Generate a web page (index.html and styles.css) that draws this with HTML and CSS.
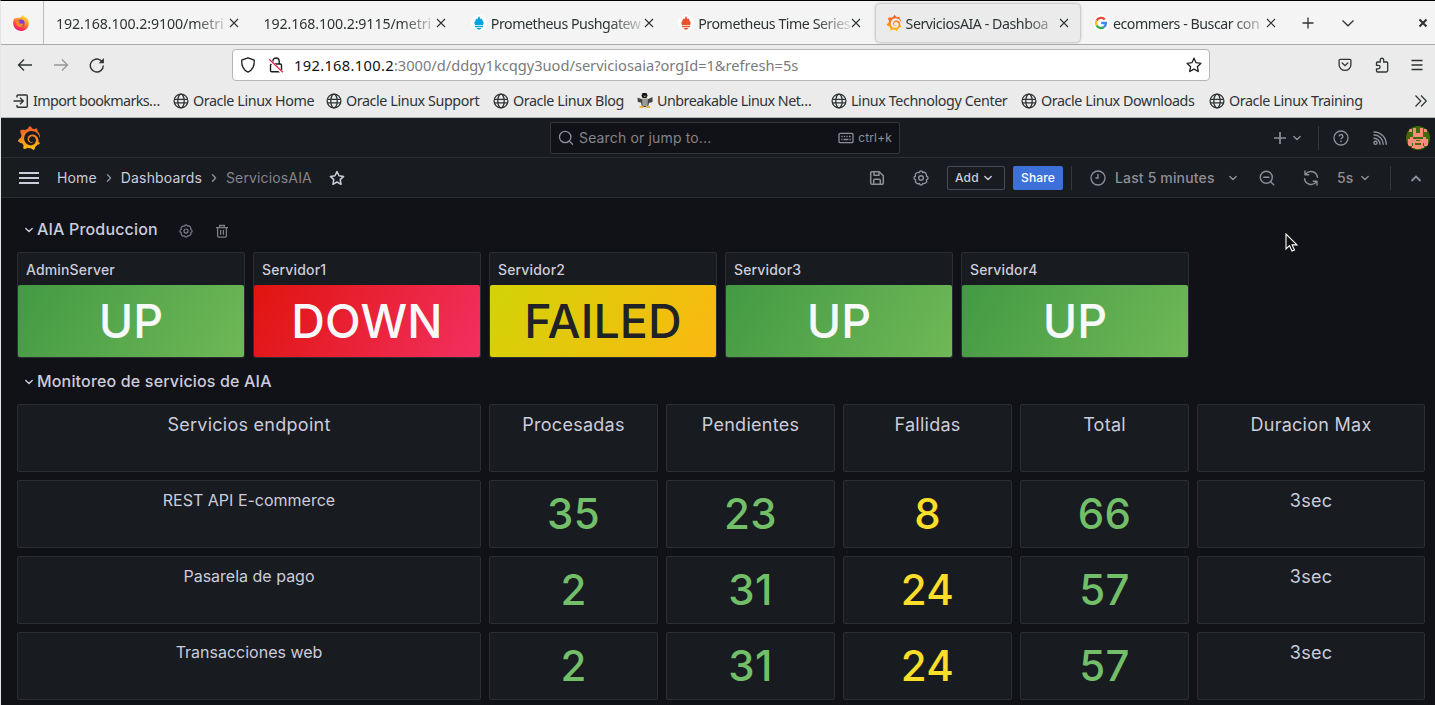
FILE: index.html
```html
<!DOCTYPE html>
<html lang="es">
<head>
<meta charset="utf-8">
<title>ServiciosAIA - Dashboards</title>
<link rel="stylesheet" href="styles.css">
</head>
<body>
<svg class="defs" width="0" height="0">
  <defs>
    <linearGradient id="g-graf" x1="0" y1="1" x2="0" y2="0"><stop offset="0" stop-color="#fcc60e"/><stop offset=".45" stop-color="#f78a1e"/><stop offset="1" stop-color="#f05a28"/></linearGradient>
    <linearGradient id="g-fox" x1=".8" y1="0" x2=".3" y2="1"><stop offset="0" stop-color="#fff14a"/><stop offset=".4" stop-color="#ff9a1f"/><stop offset=".75" stop-color="#ff3b4d"/><stop offset="1" stop-color="#e31587"/></linearGradient>
    <symbol id="grafana" viewBox="0 0 24 24"><path fill="url(#g-graf)" d="M23.02 10.59a8.578 8.578 0 0 0-.862-3.034 8.911 8.911 0 0 0-1.789-2.445c.337-1.342-.413-2.505-.413-2.505-1.292-.08-2.113.4-2.416.62-.052-.02-.102-.044-.154-.064-.22-.089-.446-.172-.677-.247-.231-.073-.47-.14-.711-.197a9.867 9.867 0 0 0-.875-.161C14.557.753 12.94 0 12.94 0c-1.804 1.145-2.147 2.744-2.147 2.744l-.018.093c-.098.029-.2.057-.298.088-.138.042-.275.094-.413.143-.138.055-.275.107-.41.166a8.869 8.869 0 0 0-1.557.87l-.063-.029c-2.497-.955-4.716.195-4.716.195-.203 2.658.996 4.33 1.235 4.636a11.608 11.608 0 0 0-.607 2.635C1.636 12.677.953 15.014.953 15.014c1.926 2.214 4.171 2.351 4.171 2.351.003-.002.006-.002.006-.005.285.509.615.994.986 1.446.156.19.32.371.488.548-.704 2.009.099 3.68.099 3.68 2.144.08 3.553-.937 3.849-1.173a9.784 9.784 0 0 0 3.164.501h.08l.055-.003.107-.002.103-.005.003.002c1.01 1.44 2.788 1.646 2.788 1.646 1.264-1.332 1.337-2.653 1.337-2.94v-.058c0-.02-.003-.039-.003-.06.265-.187.52-.387.758-.6a7.875 7.875 0 0 0 1.415-1.7c1.43.083 2.437-.885 2.437-.885-.236-1.49-1.085-2.216-1.264-2.354l-.018-.013-.016-.013a.217.217 0 0 1-.031-.02c.008-.092.016-.18.02-.27.011-.162.016-.323.016-.48v-.253l-.005-.098-.008-.135a1.891 1.891 0 0 0-.01-.13c-.003-.042-.008-.083-.013-.125l-.016-.124-.018-.122a6.215 6.215 0 0 0-2.032-3.73 6.015 6.015 0 0 0-3.222-1.46 6.292 6.292 0 0 0-.85-.048l-.107.002h-.063l-.044.003-.104.008a4.777 4.777 0 0 0-3.335 1.695c-.332.4-.592.84-.768 1.297a4.594 4.594 0 0 0-.312 1.817l.003.091c.005.055.007.11.013.164a3.615 3.615 0 0 0 .698 1.82 3.53 3.53 0 0 0 1.827 1.282c.33.098.66.14.971.137.039 0 .078 0 .114-.002l.063-.003c.02 0 .041-.003.062-.003.034-.002.065-.007.099-.01.007 0 .018-.003.028-.003l.031-.005.06-.008a1.18 1.18 0 0 0 .112-.02c.036-.008.072-.013.109-.024a2.634 2.634 0 0 0 .914-.415c.028-.02.056-.041.085-.065a.248.248 0 0 0 .039-.35.244.244 0 0 0-.309-.06l-.078.042c-.09.044-.184.083-.283.116a2.476 2.476 0 0 1-.475.096c-.028.003-.054.006-.083.006l-.083.002c-.026 0-.054 0-.08-.002l-.102-.006h-.012l-.024.006c-.016-.003-.031-.003-.044-.006-.031-.002-.06-.007-.091-.01a2.59 2.59 0 0 1-.724-.213 2.557 2.557 0 0 1-.667-.438 2.52 2.52 0 0 1-.805-1.475 2.306 2.306 0 0 1-.029-.444l.006-.122v-.023l.002-.031c.003-.021.003-.04.005-.06a3.163 3.163 0 0 1 1.352-2.29 3.12 3.12 0 0 1 .937-.43 2.946 2.946 0 0 1 .776-.101h.06l.07.002.045.003h.026l.07.005a4.041 4.041 0 0 1 1.635.49 3.94 3.94 0 0 1 1.602 1.662 3.77 3.77 0 0 1 .397 1.414l.005.076.003.075c.002.026.002.05.002.075 0 .024.003.052 0 .07v.065l-.002.073-.008.174a6.195 6.195 0 0 1-.08.639 5.1 5.1 0 0 1-.267.927 5.31 5.31 0 0 1-.624 1.13 5.052 5.052 0 0 1-3.237 2.014 4.82 4.82 0 0 1-.649.066l-.039.003h-.287a6.607 6.607 0 0 1-1.716-.265 6.776 6.776 0 0 1-3.4-2.274 6.75 6.75 0 0 1-.746-1.15 6.616 6.616 0 0 1-.714-2.596l-.005-.083-.002-.02v-.056l-.003-.073v-.096l-.003-.104v-.07l.003-.163c.008-.22.026-.45.054-.678a8.707 8.707 0 0 1 .28-1.355c.128-.444.286-.872.473-1.277a7.04 7.04 0 0 1 1.456-2.1 5.925 5.925 0 0 1 .953-.763c.169-.111.343-.213.524-.306.089-.05.182-.091.273-.135.047-.02.093-.042.138-.062a7.177 7.177 0 0 1 .714-.267l.145-.045c.049-.015.098-.026.148-.041.098-.029.197-.052.296-.076.049-.013.1-.02.15-.033l.15-.032.151-.028.076-.013.075-.01.153-.024c.057-.01.114-.013.171-.023l.169-.021c.036-.003.073-.008.106-.01l.073-.008.036-.003.042-.002c.057-.003.114-.008.171-.01l.086-.006h.023l.037-.003.145-.007a7.999 7.999 0 0 1 1.708.125 7.917 7.917 0 0 1 2.048.68 8.253 8.253 0 0 1 1.672 1.09l.09.077.089.078c.06.052.114.107.171.159.057.052.112.106.166.16.052.055.107.107.159.164a8.671 8.671 0 0 1 1.41 1.978c.012.026.028.052.04.078l.04.078.075.156c.023.051.05.1.07.153l.065.15a8.848 8.848 0 0 1 .45 1.34.19.19 0 0 0 .201.142.186.186 0 0 0 .172-.184c.01-.246.002-.532-.024-.856z"/></symbol>
    <symbol id="prom" viewBox="0 0 16 16"><circle cx="8" cy="8" r="8" fill="#fff"/><path fill="currentColor" d="M8 1c.9 1.2 1 2.300 1.200 3.200.6-.3.7-.9.7-1.300 1.200 1.600 1.900 2.500 2.300 4.300h.7L12 10.200H4L3.100 7.200h.7C4.200 5.400 4.900 4.500 6.100 2.900c0 .4.100 1 .7 1.300C7 3.300 7.100 2.200 8 1zM4 11h8v1.300H4zM5.600 13h4.800c-.4 1.200-1.300 1.700-2.400 1.700S6 14.200 5.600 13z"/></symbol>
    <symbol id="x" viewBox="0 0 10 10"><path d="M1 1l8 8M9 1L1 9" fill="none" stroke="#2e3436" stroke-width="1.100"/></symbol>
    <symbol id="globe" viewBox="0 0 16 16"><g fill="none" stroke="#2e3436" stroke-width="1.300"><circle cx="8" cy="8" r="6.900"/><ellipse cx="8" cy="8" rx="3.200" ry="6.900"/><path d="M1.300 6.400h13.400M1.300 9.900h13.400"/></g></symbol>
    <symbol id="down" viewBox="0 0 10 10"><path d="M1.800 3.500L5 6.600l3.200-3.100" fill="none" stroke="currentColor" stroke-width="1.400" stroke-linecap="round" stroke-linejoin="round"/></symbol>
    <symbol id="right" viewBox="0 0 10 10"><path d="M3.500 1.800L6.600 5 3.500 8.200" fill="none" stroke="currentColor" stroke-width="1.400" stroke-linecap="round" stroke-linejoin="round"/></symbol>
    <symbol id="cog" viewBox="0 0 16 16"><g fill="none" stroke="currentColor" stroke-width="1.400" stroke-linejoin="round"><path d="M6.300 2.500Q6.600 1 8 1t1.700 1.500Q11.500 1.600 12.700 3.100q1 1.200.8 3.200Q15 6.600 15 8t-1.500 1.700q.7 1.800-.6 3t-3.200.8Q9.400 15 8 15t-1.700-1.500q-1.800.8-3-.5t-.8-3.300Q1 9.400 1 8t1.500-1.700Q1.800 4.500 3.100 3.300t3.200-.8z"/><circle cx="8" cy="8" r="2.300"/></g></symbol>
  </defs>
</svg>

<div class="window">
  <header class="tabstrip">
    <div class="tab-pin">
      <svg width="18" height="18" viewBox="0 0 18 18"><path fill="url(#g-fox)" d="M1.200 8c.2-2 .8-3.400 1.900-4.500 0 .6.200 1.100.5 1.400C5 3.600 6 3.600 7.200 3.900 8.600 3.700 9.800 2.600 10.500.8c1 1.400 2 1.800 2.800 2.800.3-.2.300-.5.200-.9 2.300 1.800 3.500 4.200 3.300 7-.2 4.200-3.500 7.300-7.800 7.300S.8 13.500 1.200 8z"/><circle cx="9" cy="9" r="3.600" fill="#7a3be0"/><path fill="#ff8a1f" d="M4.300 7.200c1.300-.7 2.700-.5 3.600.1l-.8 1c.1 1.600 2.500 2 4.200.6.200 2.700-1.300 3.900-3.300 3.900-2.600 0-4.300-2.300-3.700-5.600z"/></svg>
    </div>
    <nav class="tabs">
      <div class="tab"><span class="tab-title num">192.168.100.2:9100/metri</span><svg class="close"><use href="#x"/></svg></div>
      <div class="tab"><span class="tab-title num">192.168.100.2:9115/metri</span><svg class="close"><use href="#x"/></svg></div>
      <div class="tab"><svg class="fav blue"><use href="#prom"/></svg><span class="tab-title">Prometheus Pushgatew</span><svg class="close"><use href="#x"/></svg></div>
      <div class="tab"><svg class="fav red"><use href="#prom"/></svg><span class="tab-title">Prometheus Time Series</span><svg class="close"><use href="#x"/></svg></div>
      <div class="tab active"><svg class="fav"><use href="#grafana"/></svg><span class="tab-title">ServiciosAIA - Dashboa</span><svg class="close"><use href="#x"/></svg></div>
      <div class="tab"><svg class="fav" viewBox="0 0 16 16"><circle cx="8" cy="8" r="8" fill="#fff"/><g fill="none" stroke-width="2.400"><path stroke="#ea4335" d="M11.800 4.500A5 5 0 0 0 3.700 5.500"/><path stroke="#fbbc05" d="M3.700 5.500a5 5 0 0 0 0 5"/><path stroke="#34a853" d="M3.700 10.500a5 5 0 0 0 7.300 1.500"/><path stroke="#4285f4" d="M11 12a5 5 0 0 0 1.900-4H8.200"/></g></svg><span class="tab-title">ecommers - Buscar con</span><svg class="close"><use href="#x"/></svg></div>
    </nav>
    <div class="tab-actions">
      <svg width="14" height="14" viewBox="0 0 14 14"><path d="M7 1.500v11M1.500 7h11" stroke="#2e3436" stroke-width="1.300"/></svg>
      <svg width="14" height="14" viewBox="0 0 14 14"><path d="M1.500 4.500L7 9.800l5.500-5.300" fill="none" stroke="#2e3436" stroke-width="1.300"/></svg>
      <svg class="win-close" width="10" height="10" viewBox="0 0 10 10"><path d="M1.500 1.500l7 7M8.500 1.500l-7 7" stroke="#2e3436" stroke-width="2.100"/></svg>
    </div>
  </header>

  <div class="toolbar">
    <div class="nav-buttons">
      <svg width="16" height="16" viewBox="0 0 16 16"><path d="M15 8H1.500M7 2.500L1.500 8 7 13.500" fill="none" stroke="#2e3436" stroke-width="1.300"/></svg>
      <svg class="dim" width="16" height="16" viewBox="0 0 16 16"><path d="M1 8h13.500M9 2.500L14.500 8 9 13.500" fill="none" stroke="#2e3436" stroke-width="1.300"/></svg>
      <svg width="16" height="16" viewBox="0 0 16 16"><path d="M14.300 8.500A6.500 6.500 0 1 1 11.800 3.400l2 2" fill="none" stroke="#2e3436" stroke-width="1.400"/><path d="M14.900 1v5.300H9.600z" fill="#2e3436"/></svg>
    </div>
    <div class="urlbar">
      <svg width="16" height="16" viewBox="0 0 16 16"><path d="M8 .9l6.300 2.300c.2 5-1.500 9.700-6.300 12C3.200 12.900 1.500 8.200 1.700 3.200z" fill="none" stroke="#1b1d1e" stroke-width="1.300" stroke-linejoin="round"/></svg>
      <svg class="lock" width="16" height="16" viewBox="0 0 16 16"><rect x="2.500" y="7" width="11" height="7.700" rx="1.300" fill="none" stroke="#1b1d1e" stroke-width="1.400"/><path d="M4.800 7V4.200a3.200 3.200 0 0 1 6.400 0V7" fill="none" stroke="#1b1d1e" stroke-width="1.400"/><path d="M1.500 3.300L14 15.500" stroke="#fff" stroke-width="3"/><path d="M1.200 2.200L14.800 15.300" stroke="#e22850" stroke-width="1.300"/></svg>
      <span class="url"><b class="host">192.168.100.2</b><span class="path">:3000/d/ddgy1kcqgy3uod/serviciosaia?orgId=1&amp;refresh=5s</span></span>
      <svg class="star" width="16" height="16" viewBox="0 0 16 16"><path d="M8 1.200l2.050 4.500 4.900.6-3.600 3.350.95 4.900L8 12.100l-4.300 2.450.95-4.900L1.050 6.300l4.900-.6z" fill="none" stroke="#1b1d1e" stroke-width="1.300" stroke-linejoin="round"/></svg>
    </div>
    <div class="tool-icons">
      <svg width="14" height="14" viewBox="0 0 14 14"><path d="M2.300 1.300h9.400a1.200 1.200 0 0 1 1.200 1.200v4a5.900 5.900 0 0 1-11.800 0v-4a1.200 1.200 0 0 1 1.200-1.200z" fill="none" stroke="#2e3436" stroke-width="1.300"/><path d="M4.200 5L7 7.700 9.800 5" fill="none" stroke="#2e3436" stroke-width="1.300" stroke-linecap="round"/></svg>
      <svg width="16" height="16" viewBox="0 0 16 16"><path d="M3.500 15h8.700a1.500 1.500 0 0 0 1.500-1.500V6a1 1 0 0 0-1-1H9.700V3a1.750 1.750 0 0 0-3.500 0v2H3.500a1 1 0 0 0-1 1v2.300h1.800a1.750 1.750 0 0 1 0 3.500H2.500V14a1 1 0 0 0 1 1z" fill="none" stroke="#2e3436" stroke-width="1.300"/></svg>
      <svg width="12" height="12" viewBox="0 0 12 12"><path d="M.5 1.500h11M.5 6h11M.5 10.500h11" stroke="#2e3436" stroke-width="1.300"/></svg>
    </div>
  </div>

  <div class="bookmarks">
    <span class="bm b1"><svg viewBox="0 0 16 16"><path d="M4 4.500V3a1 1 0 0 1 1-1h8.300a1 1 0 0 1 1 1v10.300a1 1 0 0 1-1 1H5a1 1 0 0 1-1-1V12M.5 8h9M7 4.800L10.300 8 7 11.200" fill="none" stroke="#2e3436" stroke-width="1.400"/></svg>Import bookmarks…</span>
    <span class="bm b2"><svg><use href="#globe"/></svg>Oracle Linux Home</span>
    <span class="bm b3"><svg><use href="#globe"/></svg>Oracle Linux Support</span>
    <span class="bm b4"><svg><use href="#globe"/></svg>Oracle Linux Blog</span>
    <span class="bm b5"><svg viewBox="0 0 16 16"><path fill="#444" d="M.5 4.500L4.500 6h7l4-2v5l-3.500 1-1 4H5L4 9.500.8 9z"/><path fill="#151515" d="M5.500 0h4l1 2.500-1 2.500h-4l-1-2.300z"/><path fill="#9b9b9b" d="M5 5.500h6L10.500 13h-5z"/><path fill="#e9b53a" d="M6.500 2.800h2.500l-1.200 1.500zM2.500 13h4v2h-4zM9 13h4v2H9z"/></svg>Unbreakable Linux Net…</span>
    <span class="bm b6"><svg><use href="#globe"/></svg>Linux Technology Center</span>
    <span class="bm b7"><svg><use href="#globe"/></svg>Oracle Linux Downloads</span>
    <span class="bm b8"><svg><use href="#globe"/></svg>Oracle Linux Training</span>
    <svg class="more" viewBox="0 0 14 14"><path d="M1.500 1.500L6.800 7l-5.300 5.500M7 1.500L12.300 7 7 12.500" fill="none" stroke="#2e3436" stroke-width="1.200"/></svg>
  </div>

  <main class="grafana">
    <div class="topbar">
      <svg class="logo" width="24" height="24"><use href="#grafana"/></svg>
      <div class="search">
        <svg width="16" height="16" viewBox="0 0 16 16"><circle cx="7.200" cy="7" r="5.700" fill="none" stroke="currentColor" stroke-width="1.300"/><path d="M11.500 11.300l3 3" stroke="currentColor" stroke-width="1.300" stroke-linecap="round"/></svg>
        <span class="ph">Search or jump to...</span>
        <svg class="kbd" width="16" height="12" viewBox="0 0 16 12"><rect x="1" y="1.300" width="14" height="9.400" rx="1.300" fill="none" stroke="currentColor" stroke-width="1.300"/><path d="M3.300 4.500h1.300m1.200 0h1.300m1.300 0h1.300m1.300 0h1.600M3.300 7.500h1.200m1 0h5m1 0h1.300" stroke="currentColor" stroke-width="1.300"/></svg>
        <span class="key">ctrl+k</span>
      </div>
      <div class="top-actions">
        <svg width="14" height="14" viewBox="0 0 14 14"><path d="M7 1v12M1 7h12" stroke="currentColor" stroke-width="1.700"/></svg>
        <svg class="chev" width="10" height="10"><use href="#down"/></svg>
        <i class="sep"></i>
        <svg class="help" width="16" height="16" viewBox="0 0 16 16"><circle cx="8" cy="8" r="7" fill="none" stroke="currentColor" stroke-width="1.300"/><path d="M6.100 6.500a1.900 1.900 0 1 1 2.700 1.700c-.6.300-.8.500-.8 1.100" fill="none" stroke="currentColor" stroke-width="1.400"/><circle cx="8" cy="11.300" r=".9" fill="currentColor"/></svg>
        <svg class="rss" width="16" height="16" viewBox="0 0 16 16"><g fill="none" stroke="currentColor" stroke-width="1.400" stroke-linecap="round"><circle cx="3.500" cy="12.800" r="1.600"/><path d="M2 8.200a6 6 0 0 1 6 6M2 5a9.200 9.200 0 0 1 9.200 9.200M2 2a12.200 12.200 0 0 1 12.200 12.200"/></g></svg>
        <svg class="avatar" width="24" height="24" viewBox="0 0 24 24"><clipPath id="av"><circle cx="12" cy="12" r="12"/></clipPath><g clip-path="url(#av)"><path fill="#436a08" d="M0 0h24v24H0z"/><path fill="#fb8c7b" d="M3 3h3v3H3zM18 3h3v3h-3zM7 2h3v5h4V2h3v9H7zM4 11h3v2h10v-2h3v2h2v7h-4v2h-3v1H9v-1H6v-2H2v-7h2z"/><path fill="#436a08" d="M10 14h4v1h-4zM9 17h6v2H9zM6 17h1v3H6zM17 17h1v3h-1z"/></g></svg>
      </div>
    </div>

    <div class="navbar">
      <svg class="burger" width="20" height="12" viewBox="0 0 20 12"><path d="M0 1h20M0 6h20M0 11h20" stroke="#ccccdc" stroke-width="2"/></svg>
      <nav class="crumbs">
        <a>Home</a><svg><use href="#right"/></svg><a>Dashboards</a><svg><use href="#right"/></svg><span>ServiciosAIA</span>
      </nav>
      <svg class="fav-star" width="16" height="16" viewBox="0 0 16 16"><path d="M8 1.500l2 4.300 4.600.6-3.400 3.200.9 4.700L8 12l-4.100 2.300.9-4.700L1.400 6.400 6 5.800z" fill="none" stroke="#ccccdc" stroke-width="1.500" stroke-linejoin="round"/></svg>
      <div class="nav-right">
        <svg class="save" width="16" height="16" viewBox="0 0 16 16"><g fill="none" stroke="currentColor" stroke-width="1.500" stroke-linejoin="round"><path d="M2.700 1.700h7.500l4.100 4.100v7.200a1.300 1.300 0 0 1-1.300 1.300H3A1.300 1.300 0 0 1 1.700 13V2.700a1 1 0 0 1 1-1z"/><path d="M5 2v3.300h5V2.300M4.700 14v-3.700a1 1 0 0 1 1-1h4.600a1 1 0 0 1 1 1V14"/></g></svg>
        <svg class="gear" width="16" height="16"><use href="#cog"/></svg>
        <span class="btn add">Add<svg width="10" height="10"><use href="#down"/></svg></span>
        <span class="btn share">Share</span>
        <i class="sep s1"></i>
        <svg class="clock" width="16" height="16" viewBox="0 0 16 16"><circle cx="8" cy="8" r="7" fill="none" stroke="currentColor" stroke-width="1.300"/><path d="M8 4v4H5.500" fill="none" stroke="currentColor" stroke-width="1.300"/></svg>
        <span class="range">Last 5 minutes</span>
        <svg class="range-chev" width="10" height="10"><use href="#down"/></svg>
        <svg class="zoom" width="16" height="16" viewBox="0 0 16 16"><circle cx="7.300" cy="7.300" r="6" fill="none" stroke="currentColor" stroke-width="1.400"/><path d="M4.700 7.300h5.200M11.700 11.700l3 3" stroke="currentColor" stroke-width="1.400" stroke-linecap="round"/></svg>
        <svg class="refresh" width="16" height="16" viewBox="0 0 16 16"><path d="M1.500 8.700a6.600 6.600 0 0 0 11.800 3.200M14.500 7.300A6.600 6.600 0 0 0 2.700 4.100M2 1v3.700h3.700M14 15v-3.700h-3.700" fill="none" stroke="currentColor" stroke-width="1.400" stroke-linecap="round" stroke-linejoin="round"/></svg>
        <span class="every">5s</span>
        <svg class="every-chev" width="10" height="10"><use href="#down"/></svg>
        <i class="sep s2"></i>
        <svg class="up" width="12" height="10" viewBox="0 0 12 10"><path d="M1.500 8L6 3.500 10.500 8" fill="none" stroke="currentColor" stroke-width="1.900"/></svg>
      </div>
    </div>

    <section class="dash">
      <div class="row-title first"><svg class="fold" width="10" height="10"><use href="#down"/></svg><h2>AIA Produccion</h2>
        <svg class="row-gear" width="14" height="14"><use href="#cog"/></svg>
        <svg class="row-trash" width="14" height="14" viewBox="0 0 14 14"><path d="M1 3.600h12M4.700 3.300V1.500h4.600v1.800M2.600 3.600v8.200a1.300 1.300 0 0 0 1.300 1.300h6.200a1.300 1.300 0 0 0 1.300-1.300V3.600M5.600 6v4.800M8.400 6v4.800" fill="none" stroke="currentColor" stroke-width="1.300"/></svg>
      </div>
      <div class="servers">
        <article class="server"><h3>AdminServer</h3><div class="state ok">UP</div></article>
        <article class="server"><h3>Servidor1</h3><div class="state bad">DOWN</div></article>
        <article class="server"><h3>Servidor2</h3><div class="state warn">FAILED</div></article>
        <article class="server"><h3>Servidor3</h3><div class="state ok">UP</div></article>
        <article class="server"><h3>Servidor4</h3><div class="state ok">UP</div></article>
      </div>
      <div class="row-title second"><svg class="fold" width="10" height="10"><use href="#down"/></svg><h2>Monitoreo de servicios de AIA</h2></div>
      <div class="services">
        <div class="cell head">Servicios endpoint</div><div class="cell head">Procesadas</div><div class="cell head">Pendientes</div><div class="cell head">Fallidas</div><div class="cell head">Total</div><div class="cell head">Duracion Max</div>
        <div class="cell name">REST API E-commerce</div><div class="cell stat">35</div><div class="cell stat">23</div><div class="cell stat y">8</div><div class="cell stat">66</div><div class="cell head">3sec</div>
        <div class="cell name">Pasarela de pago</div><div class="cell stat">2</div><div class="cell stat">31</div><div class="cell stat y">24</div><div class="cell stat">57</div><div class="cell head">3sec</div>
        <div class="cell name">Transacciones web</div><div class="cell stat">2</div><div class="cell stat">31</div><div class="cell stat y">24</div><div class="cell stat">57</div><div class="cell head">3sec</div>
      </div>
    </section>
  </main>
</div>
<svg class="pointer" width="14" height="20" viewBox="0 0 14 20"><path d="M1 1v15l3.500-3.300L7 18l2.500-1.100-2.400-5H12z" fill="#111" stroke="#fff" stroke-width="1.100"/></svg>
</body>
</html>
```
FILE: styles.css
```css
* { box-sizing: border-box; }
body { margin: 0; width: 1435px; height: 705px; overflow: hidden; background: #111217; }
svg { display: block; flex: none; }
.defs { position: absolute; }
h2, h3 { margin: 0; font-weight: 500; }

.window { height: 705px; border-top: 1px solid #000; border-left: 1px solid #e4e4e4; display: flex; flex-direction: column; font-family: "Noto Sans", sans-serif; color: #2e3436; }

/* browser chrome */
.tabstrip { height: 44px; flex: none; display: flex; background: #f4f4f4; border-bottom: 1px solid #a9a9a9; }
.tab-pin { width: 43px; border-right: 1px solid #bcbcbc; display: flex; align-items: center; padding-left: 11px; }
.tabs { display: flex; gap: 3.4px; padding: 3px 0 2px 2px; }
.tab { width: 204px; height: 38px; display: flex; align-items: center; border-radius: 4px; padding: 0 11px 0 10px; font-size: 14.2px; }
.tab.active { background: #ebebeb; box-shadow: 0 0 3px rgba(0,0,0,.45); }
.fav { width: 16px; height: 16px; margin: 0 4px 0 0; }
.fav.blue { color: #00a5df; }
.fav.red { color: #e6522c; }
.tab-title { flex: 1; min-width: 0; white-space: nowrap; letter-spacing: -.45px; -webkit-mask-image: linear-gradient(to left, rgba(0,0,0,.15) 0, #000 34px); mask-image: linear-gradient(to left, rgba(0,0,0,.15) 0, #000 34px); }
.tab-title.num { letter-spacing: -.1px; }
.close { width: 10px; height: 10px; margin-left: 1px; }
.tab-actions { flex: 1; display: flex; align-items: center; gap: 26px; padding-left: 14px; }
.win-close { margin-left: auto; margin-right: 7px; }

.toolbar { height: 40px; flex: none; display: flex; align-items: center; background: #ebebeb; padding-left: 16px; }
.nav-buttons { display: flex; gap: 20px; width: 215px; }
.dim { opacity: .45; }
.urlbar { width: 978px; height: 32px; border: 1px solid #b5b5b5; border-radius: 4px; background: #fff; display: flex; align-items: center; padding: 0 7px; font-size: 14.67px; }
.lock { margin-left: 12px; }
.url { margin-left: 10px; flex: 1; white-space: nowrap; padding-bottom: 1px; }
.host { font-weight: 400; color: #111; letter-spacing: .33px; }
.path { color: #7b7b7b; letter-spacing: -.02px; }
.tool-icons { display: flex; align-items: center; margin-left: 128px; gap: 21.500px; }

.bookmarks { height: 33px; flex: none; display: grid; grid-template-columns: 160px 153px 167px 144px 194px 190px 188px 1fr 14px; align-items: center; background: #ebebeb; border-bottom: 1px solid #b4b4b4; padding: 0 7px 1px 12px; font-size: 14.3px; }
.bm { display: flex; align-items: center; gap: 4px; white-space: nowrap; letter-spacing: -.4px; }
.b1 { letter-spacing: -.62px; }
.b5 { letter-spacing: -.5px; }
.bm svg { width: 16px; height: 16px; }
.more { width: 14px; height: 14px; }

/* dashboard */
.grafana { flex: 1; min-height: 0; background: #111217; color: #ccccdc; font-family: Inter, sans-serif; font-size: 14px; letter-spacing: .15px; }
.topbar { height: 40px; background: #181b1f; border-bottom: 1px solid #2c2d32; display: flex; align-items: center; color: #8e8f99; }
.logo { margin-left: 16px; width: 24px; }
.search { margin-left: 509px; width: 350px; height: 32px; border: 1px solid #36373d; border-radius: 2px; background: #111217; display: flex; align-items: center; padding: 0 7px; }
.ph { margin-left: 5px; flex: 1; color: #83848d; }
.key { font-size: 12px; margin-left: 4px; }
.top-actions { flex: 1; display: flex; align-items: center; justify-content: flex-end; padding-right: 5px; }
.chev { margin-left: 5px; margin-right: 16px; }
.sep { width: 1px; height: 24px; background: #36373d; }
.help { margin-left: 14px; }
.rss { margin: 0 18px 0 23px; }

.navbar { height: 40px; background: #181b1f; border-bottom: 1px solid #2c2d32; display: flex; align-items: center; }
.burger { margin-left: 18px; margin-right: 18px; }
.crumbs { display: flex; align-items: center; }
.crumbs svg { width: 10px; height: 10px; margin: 0 7px; color: #8e8f99; }
.crumbs span { color: #84858e; }
.fav-star { margin-left: 17px; }
.nav-right { flex: 1; display: flex; align-items: center; justify-content: flex-end; padding-right: 13px; color: #8e8f99; }
.gear { margin: 0 18px 0 28px; }
.btn { height: 24px; border-radius: 2px; font-size: 12px; font-weight: 500; display: flex; align-items: center; justify-content: center; }
.add { width: 58px; border: 1px solid #4b4c53; color: #ccccdc; gap: 4px; justify-content: flex-start; padding-left: 7px; }
.share { width: 50px; margin-left: 8px; background: #3d71d9; color: #fff; }
.s1 { margin: 0 18px 0 8px; }
.range { margin-left: 9px; font-weight: 500; width: 101px; white-space: nowrap; }
.range-chev { margin: 0 21px 0 12px; }
.refresh { margin: 0 18px 0 28px; }
.every { font-weight: 500; width: 16px; }
.every-chev { margin: 0 20px 0 7px; }
.up { margin-left: 19px; }

.dash { padding: 16px 10px 0 16px; }
.row-title { display: flex; align-items: center; padding-left: 7px; }
.row-title h2 { font-size: 16px; line-height: 22px; margin-left: 3px; letter-spacing: .17px; }
.fold { margin-top: 2px; }
.first { height: 38px; padding-bottom: 8px; }
.row-gear { margin: 3px 22px 0 21px; color: #7c7d86; }
.row-trash { margin-top: 3px; color: #7c7d86; }
.second { height: 46px; }
.servers { display: grid; grid-template-columns: repeat(5, 228px); gap: 8px; }
.server { height: 106px; border: 1px solid #2c2e33; border-radius: 2px; background: #181b1f; }
.server h3 { height: 32px; line-height: 34px; padding-left: 8px; font-size: 14px; letter-spacing: .15px; }
.state { height: 72px; border-radius: 2px; font-size: 46.6px; font-weight: 500; line-height: 73px; text-align: center; letter-spacing: .1px; color: #f7f8fa; }
.ok { background: linear-gradient(120deg, #439a43, #6fb857); }
.bad { background: linear-gradient(120deg, #e0140f, #f23060); }
.warn { background: linear-gradient(120deg, #d3d307, #fbb811); color: #202226; }
.services { display: grid; grid-template-columns: 464px repeat(4, 169px) 228px; gap: 8px; }
.cell { height: 68px; border: 1px solid #2c2e33; border-radius: 2px; background: #181b1f; text-align: center; }
.head { font-size: 18px; line-height: 22px; padding-top: 9px; letter-spacing: .26px; }
.name { font-size: 16px; line-height: 22px; padding-top: 8px; letter-spacing: 0; }
.stat { font-size: 42px; font-weight: 500; line-height: 65px; letter-spacing: .3px; color: #73bf69; }
.y { color: #fade2a; }

.pointer { position: absolute; left: 1285px; top: 233px; }
```
